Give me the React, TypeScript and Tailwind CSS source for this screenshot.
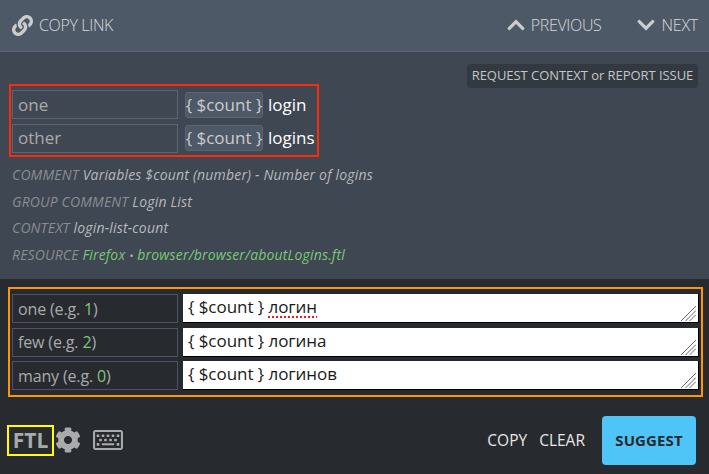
import type { ReactNode } from "react";
import { FaChevronDown, FaChevronUp, FaCog, FaLink, FaRegKeyboard } from "react-icons/fa";

const sources = [
  { form: "one", text: "login" },
  { form: "other", text: "logins" },
];

const targets = [
  { form: "one", example: "1", text: "логин", misspelled: true },
  { form: "few", example: "2", text: "логина", misspelled: false },
  { form: "many", example: "0", text: "логинов", misspelled: false },
];

function Meta({ label, children }: { label: string; children: ReactNode }) {
  return (
    <div className="h-[26.5px] whitespace-nowrap text-[14px] leading-[26px] tracking-[0.18px] text-[#b8b9bb]">
      <span className="tracking-[0.15px] text-[#8b8d90]">{label}</span> {children}
    </div>
  );
}

function ResizeGrip() {
  return (
    <svg className="absolute right-[2px] bottom-[1px] size-[15px]" viewBox="0 0 15 15" stroke="#6a6a6a" strokeWidth="1">
      <path d="M0 15L15 0M4.5 15L15 4.5M8.5 15L15 8.5" />
    </svg>
  );
}

export default function App() {
  return (
    <div className="flex h-[474px] w-[709px] flex-col overflow-hidden bg-[#272a2f] font-['Open_Sans',sans-serif]">
      <header className="flex h-[52px] shrink-0 items-center border-b border-[#5e6475] bg-[#4d5967] pr-[11px] pb-[2px] pl-[12px] text-[16px] font-light text-[#dadada]">
        <FaLink className="mt-px mr-[6px] size-[21px] text-[#cccccc]" />
        <span className="tracking-[-0.35px]">COPY LINK</span>
        <FaChevronUp className="mr-[5px] ml-auto size-[20px] text-[#cccccc]" />
        <span className="mr-[35px] tracking-[-0.35px]">PREVIOUS</span>
        <FaChevronDown className="mr-[5px] size-[20px] text-[#cccccc]" />
        <span className="tracking-[-0.2px]">NEXT</span>
      </header>

      <section className="flex h-[227px] shrink-0 flex-col bg-[#3f4752] pt-[12px]">
        <button className="mr-[11px] flex h-[24px] w-[231px] items-center justify-center self-end rounded-[4px] bg-[#333941] text-[13px] tracking-[-0.05px] whitespace-nowrap text-[#c4c6c8]">
          REQUEST CONTEXT or REPORT ISSUE
        </button>
        <div className="-mt-[4px] ml-[9px] flex h-[73px] w-[310px] flex-col gap-[4px] border-2 border-[#ff2a0a] pt-[4px] pl-px">
          {sources.map((s) => (
            <div key={s.form} className="flex h-[29.5px] items-center text-[17px] whitespace-nowrap">
              <span className="mr-[7px] flex h-[29px] w-[166px] items-center border border-[#5e6475] pb-px pl-[5px] text-[#aaaaaa]">{s.form}</span>
              <span className="mr-[5px] flex h-[26px] w-[78px] items-center justify-center rounded-[3px] border border-[#5e6475] bg-[#4d5967] pb-px text-[#cccccc]">{"{ $count }"}</span>
              <span className="pb-px text-white">{s.text}</span>
            </div>
          ))}
        </div>
        <div className="mt-[5px] pl-[12px] italic">
          <Meta label="COMMENT">Variables $count (number) - Number of logins</Meta>
          <Meta label="GROUP COMMENT">Login List</Meta>
          <Meta label="CONTEXT">login-list-count</Meta>
          <Meta label="RESOURCE">
            <span className="text-[#7bc876]">Firefox</span> <span className="text-[11px]">•</span> <span className="text-[#7bc876]">browser/browser/aboutLogins.ftl</span>
          </Meta>
        </div>
      </section>

      <main className="mt-[8px] ml-[8px] flex h-[110px] w-[695px] shrink-0 flex-col gap-[4px] border-2 border-[#ff9500] pt-[5px] pl-[2px]">
        {targets.map((t) => (
          <div key={t.form} className="flex h-[29.5px] whitespace-nowrap">
            <div className="mr-[5px] flex h-[29px] w-[166px] items-center border border-[#4d5266] pl-[5px] text-[16px] tracking-[-0.15px] text-[#aaaaaa]">
              <span>
                {t.form} (e.g. <span className="text-[#7bc876]">{t.example}</span>)
              </span>
            </div>
            <div className="relative h-[29px] w-[516px] border-r border-b border-black bg-white pl-[5px] text-[17px] leading-[26px] tracking-[-0.05px] text-[#1a1a1a]">
              {"{ $count } "}
              <span className={t.misspelled ? "underline decoration-[#f01818] decoration-dotted decoration-2 underline-offset-[3px]" : ""}>{t.text}</span>
              <ResizeGrip />
            </div>
          </div>
        ))}
      </main>

      <footer className="flex flex-1 items-center pt-[10px] pr-[13px] pl-[7px]">
        <button className="flex h-[31px] w-[47px] items-center justify-center border-2 border-[#ffff00] text-[21px] font-bold text-[#aaaaaa]">FTL</button>
        <FaCog className="-mt-px ml-px size-[26px] text-[#aaaaaa]" />
        <FaRegKeyboard className="-mt-px ml-[12px] size-[30px] text-[#aaaaaa]" />
        <button className="mr-[12px] ml-auto text-[15.5px] text-[#e8e8e8]">COPY</button>
        <button className="mr-[17px] text-[15.5px] text-[#e8e8e8]">CLEAR</button>
        <button className="h-[49px] w-[94px] rounded-[4px] bg-[#4fc4f6] text-[15px] font-bold tracking-[0.1px] text-[#272a2f]">SUGGEST</button>
      </footer>
    </div>
  );
}
